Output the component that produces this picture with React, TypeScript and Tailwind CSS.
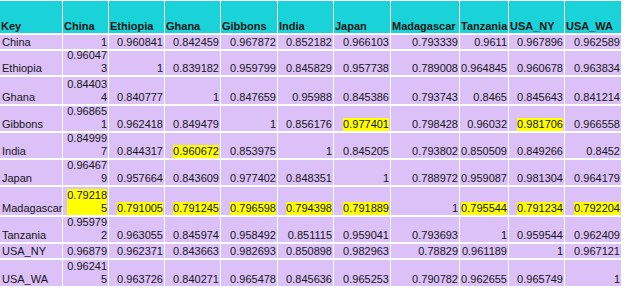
const cols = ["China", "Ethiopia", "Ghana", "Gibbons", "India", "Japan", "Madagascar", "Tanzania", "USA_NY", "USA_WA"];

// "*" prefix = yellow highlight, "\n" = wrapped line
const rows: { key: string; h: string; cells: string[] }[] = [
  { key: "China", h: "h-[14px]", cells: ["1", "0.960841", "0.842459", "0.967872", "0.852182", "0.966103", "0.793339", "0.9611", "0.967896", "0.962589"] },
  { key: "Ethiopia", h: "h-[24px]", cells: ["0.96047\n3", "1", "0.839182", "0.959799", "0.845829", "0.957738", "0.789008", "0.964845", "0.960678", "0.963834"] },
  { key: "Ghana", h: "h-[27px]", cells: ["0.84403\n4", "0.840777", "1", "0.847659", "0.95988", "0.845386", "0.793743", "0.8465", "0.845643", "0.841214"] },
  { key: "Gibbons", h: "h-[25px]", cells: ["0.96865\n1", "0.962418", "0.849479", "1", "0.856176", "*0.977401", "0.798428", "0.96032", "*0.981706", "0.966558"] },
  { key: "India", h: "h-[25px]", cells: ["0.84999\n7", "0.844317", "*0.960672", "0.853975", "1", "0.845205", "0.793802", "0.850509", "0.849266", "0.8452"] },
  { key: "Japan", h: "h-[25px]", cells: ["0.96467\n9", "0.957664", "0.843609", "0.977402", "0.848351", "1", "0.788972", "0.959087", "0.981304", "0.964179"] },
  { key: "Madagascar", h: "h-[28px]", cells: ["*0.79218\n5", "*0.791005", "*0.791245", "*0.796598", "*0.794398", "*0.791889", "1", "*0.795544", "*0.791234", "*0.792204"] },
  { key: "Tanzania", h: "h-[25px]", cells: ["0.95979\n2", "0.963055", "0.845974", "0.958492", "0.851115", "0.959041", "0.793693", "1", "0.959544", "0.962409"] },
  { key: "USA_NY", h: "h-[14px]", cells: ["0.96879", "0.962371", "0.843663", "0.982693", "0.850898", "0.982963", "0.78829", "0.961189", "1", "0.967121"] },
  { key: "USA_WA", h: "h-[26px]", cells: ["0.96241\n5", "0.963726", "0.840271", "0.965478", "0.845636", "0.965253", "0.790782", "0.962655", "0.965749", "1"] },
];

function Value({ v }: { v: string }) {
  const hl = v.startsWith("*");
  const lines = (hl ? v.slice(1) : v).split("\n");
  return (
    <span className={hl ? "bg-[#ffff00]" : ""}>
      {lines.map((l, i) => (
        <span key={i}>
          {i > 0 && <br />}
          {l}
        </span>
      ))}
    </span>
  );
}

export default function App() {
  return (
    <div className="w-[624px] h-[294px] bg-white pt-[1px] text-[11px] leading-[13px] text-[#161616]" style={{ fontFamily: '"Liberation Sans", Arial, sans-serif' }}>
      <div className="grid grid-cols-[62px_45px_55px_55px_56px_55px_56px_68px_48px_55px_56px] gap-x-[1px] gap-y-[2px] w-[621px]">
        <div className="h-[32px] bg-[#1ad3d8] font-bold flex items-end pl-[1px]">Key</div>
        {cols.map((c) => (
          <div key={c} className="h-[32px] bg-[#1ad3d8] font-bold flex items-end pl-[1px] whitespace-nowrap overflow-hidden">
            {c}
          </div>
        ))}
        {rows.map((r) => (
          <div key={r.key} className="contents">
            <div className={`${r.h} bg-[#dcc1f9] flex items-end pl-[2px] whitespace-nowrap`}>{r.key}</div>
            {r.cells.map((v, i) => (
              <div key={i} className={`${r.h} bg-[#dcc1f9] flex items-end justify-end text-right pr-[1px] whitespace-nowrap`}>
                <Value v={v} />
              </div>
            ))}
          </div>
        ))}
      </div>
    </div>
  );
}
